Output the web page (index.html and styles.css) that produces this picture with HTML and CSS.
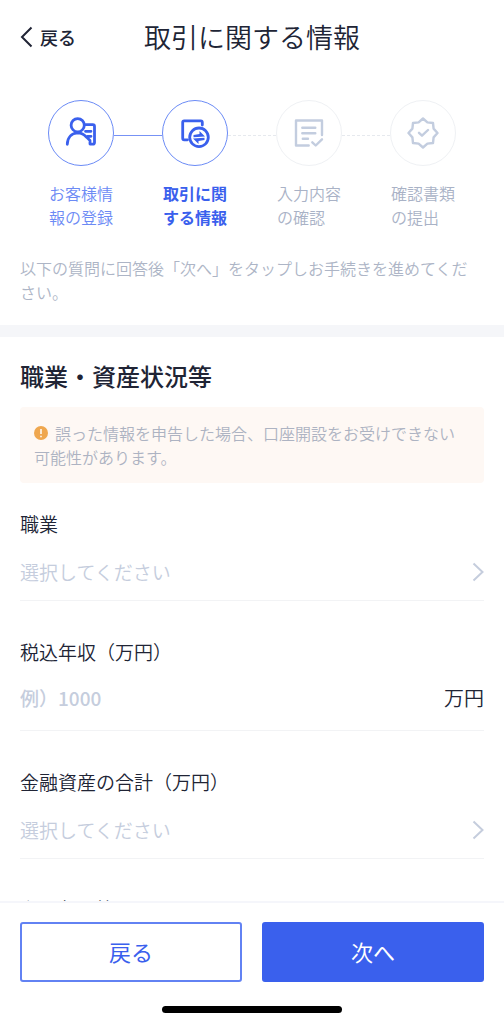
FILE: index.html
```html
<!DOCTYPE html>
<html lang="ja">
<head>
<meta charset="utf-8">
<meta name="viewport" content="width=device-width, initial-scale=1">
<title>取引に関する情報</title>
<link rel="stylesheet" href="styles.css">
</head>
<body>
<div class="app">
  <header class="header">
    <button class="back" type="button">
      <svg class="back-icon" viewBox="0 0 13 22" aria-hidden="true"><path d="M11.5 1.5 2 11l9.5 9.5"/></svg>
      <span>戻る</span>
    </button>
    <h1 class="title">取引に関する情報</h1>
  </header>

  <main class="content">
    <ol class="steps">
      <li class="step step-done">
        <span class="step-circle">
          <svg class="step-icon" viewBox="0 0 32 32" aria-hidden="true"><circle cx="12.7" cy="8.2" r="6.6"/><path d="M2.3 27.3C2.5 20 7 16 12.7 15.8c3.400 0 6.500 1.500 8.500 4.200M20.500 7.700h7.300q1.700 0 1.700 1.700v16q0 1.700-1.700 1.700H25v-3.500l-4-4M20.500 14.300H26M22.500 19.300H26"/></svg>
        </span>
        <span class="step-label">お客様情報の登録</span>
      </li>
      <li class="link link-done" aria-hidden="true"></li>
      <li class="step step-current" aria-current="step">
        <span class="step-circle">
          <svg class="step-icon" viewBox="0 0 32 32" aria-hidden="true"><path d="M23.300 8V5.300q0-1.500-1.500-1.500H5.200q-1.500 0-1.500 1.500v16q0 1.500 1.500 1.500H8.500"/><circle cx="20" cy="20.300" r="9.300"/><path class="arrows" d="M14.500 18 20.500 17V14L26 19.600 14.500 20.300ZM25.500 20.800 14 21.500 19.500 27V24L25.500 23Z"/></svg>
        </span>
        <span class="step-label">取引に関する情報</span>
      </li>
      <li class="link" aria-hidden="true"></li>
      <li class="step">
        <span class="step-circle">
          <svg class="step-icon" viewBox="0 0 32 32" aria-hidden="true"><path d="M29 18V3.500H3v25h12.700M9.300 10.700h13M9.300 16.300h13M9.800 21.700H15M19.300 25.300l3.400 3.200 6.300-6.200"/></svg>
        </span>
        <span class="step-label">入力内容の確認</span>
      </li>
      <li class="link" aria-hidden="true"></li>
      <li class="step">
        <span class="step-circle">
          <svg class="step-icon" viewBox="0 0 32 32" aria-hidden="true"><path d="M16 1.500 20.400 5.400 26 6 26.600 11.600 30.500 16 26.600 20.400 26 26 20.400 26.600 16 30.500 11.600 26.600 6 26 5.400 20.400 1.500 16 5.400 11.600 6 6 11.600 5.400ZM12 15.800 15 18.700 21 13"/></svg>
        </span>
        <span class="step-label">確認書類の提出</span>
      </li>
    </ol>

    <p class="intro">以下の質問に回答後「次へ」をタップしお手続きを進めてください。</p>

    <form class="section" id="profile">
      <h2 class="section-title">職業・資産状況等</h2>
      <p class="notice"><svg class="notice-icon" viewBox="0 0 14 14" aria-hidden="true"><circle cx="7" cy="7" r="7" fill="#efa74f"/><path d="M7 3v5M7 9.800v1.400" stroke="#fff" stroke-width="1.500"/></svg>誤った情報を申告した場合、口座開設をお受けできない可能性があります。</p>

      <div class="field">
        <label class="label" for="job">職業</label>
        <div class="control">
          <select class="input" id="job"><option>選択してください</option></select>
          <svg class="chevron" viewBox="0 0 12 20" aria-hidden="true"><path d="m1.500 1.500 9 8.500-9 8.500"/></svg>
        </div>
      </div>
      <div class="field">
        <label class="label" for="income">税込年収（万円）</label>
        <div class="control control-text">
          <input class="input" id="income" type="text" inputmode="numeric" placeholder="例）1000">
          <span class="unit">万円</span>
        </div>
      </div>
      <div class="field">
        <label class="label" for="assets">金融資産の合計（万円）</label>
        <div class="control">
          <select class="input" id="assets"><option>選択してください</option></select>
          <svg class="chevron" viewBox="0 0 12 20" aria-hidden="true"><path d="m1.500 1.500 9 8.500-9 8.500"/></svg>
        </div>
      </div>
      <div class="field">
        <label class="label" for="source">主な収入等</label>
        <div class="control">
          <select class="input" id="source"><option>選択してください</option></select>
          <svg class="chevron" viewBox="0 0 12 20" aria-hidden="true"><path d="m1.500 1.500 9 8.500-9 8.500"/></svg>
        </div>
      </div>
    </form>
  </main>

  <footer class="footer">
    <div class="actions">
      <button class="button" type="button">戻る</button>
      <button class="button button-primary" type="submit" form="profile">次へ</button>
    </div>
    <div class="home-bar"></div>
  </footer>
</div>
</body>
</html>
```

FILE: styles.css
```css
* { box-sizing: border-box; }

body {
  margin: 0;
  background: #fff;
  color: #202435;
  font-family: "Noto Sans CJK JP", sans-serif;
  font-size: 16px;
  font-weight: 350;
  line-height: 24px;
}

button, input, select { font: inherit; color: inherit; }
h1, h2, p, ol { margin: 0; padding: 0; }
svg { fill: none; flex: none; }

.app { display: flex; flex-direction: column; height: 100vh; }

.header {
  display: grid;
  grid-template-columns: 1fr auto 1fr;
  align-items: center;
  height: 74px;
  padding: 0 20px;
}
.back {
  display: flex;
  align-items: center;
  justify-self: start;
  gap: 7px;
  padding: 0;
  border: 0;
  background: none;
  font-size: 18px;
  font-weight: 500;
}
.back-icon { width: 13px; height: 22px; stroke: currentColor; stroke-width: 2; }
.title { font-size: 27px; font-weight: 350; line-height: 40px; }

.content {
  flex: 1;
  min-height: 0;
  overflow-y: auto;
  scrollbar-width: none;
}

.steps {
  display: flex;
  padding: 26px 48px 0;
  list-style: none;
  color: #a9b2c6;
}
.step { width: 66px; }
.step-circle {
  display: flex;
  align-items: center;
  justify-content: center;
  width: 66px;
  height: 66px;
  margin-bottom: 15px;
  border: 1px solid #eff1f4;
  border-radius: 50%;
}
.step-icon {
  width: 32px;
  height: 32px;
  stroke: #c3cddf;
  stroke-width: 2.4;
  stroke-linecap: round;
  stroke-linejoin: round;
}
.step-label { display: block; padding-left: 1px; }
.step-done, .step-current { color: #3a60ed; }
.step-done .step-label { color: #6c8af5; }
.step-current .step-label { font-weight: 700; }
.step-done .step-circle, .step-current .step-circle { border-color: #6b8bf6; }
.step-done .step-icon, .step-current .step-icon { stroke: currentColor; stroke-width: 2.8; }
.step-icon .arrows { fill: currentColor; stroke: none; }
.link { flex: 1; height: 36px; border-bottom: 1px dashed #e6e9ee; }
.link-done { border-bottom: 1px solid #7792f5; }

.intro {
  padding: 27px 28px 21px 20px;
  border-bottom: 12px solid #f5f6f9;
  color: #adb5c6;
}

.section { padding: 22px 20px; }
.section-title { font-size: 24px; font-weight: 500; line-height: 34px; }
.notice {
  margin: 14px 0 27px;
  padding: 14px 20px 14px 14px;
  border-radius: 4px;
  background: #fef8f4;
  color: #adb3c2;
}
.notice-icon { width: 14px; height: 14px; margin-right: 7px; }

.field { margin-bottom: 37px; }
.field:last-child { margin-bottom: 0; }
.label { display: block; margin-bottom: 6px; font-size: 19px; line-height: 28px; }
.control {
  display: flex;
  align-items: center;
  height: 57px;
  border-bottom: 1px solid #f2f3f5;
  font-size: 19px;
}
.control-text { height: 59px; padding-bottom: 7px; }
.input {
  flex: 1;
  min-width: 0;
  height: 40px;
  padding: 0;
  border: 0;
  outline: 0;
  appearance: none;
  background: none;
  color: #c5cddd;
}
.input::placeholder { color: #c5cddd; font-weight: 500; opacity: 1; }
.chevron { width: 12px; height: 20px; stroke: #c5cddd; stroke-width: 2; }
.unit { font-size: 20px; }

.footer { padding: 19px 20px 11px; border-top: 2px solid #f5f6fb; background: #fff; }
.actions { display: grid; grid-template-columns: 1fr 1fr; gap: 20px; }
.field:nth-last-child(2) { margin-bottom: 36px; }
.button {
  height: 60px;
  padding: 0 0 2px;
  border: 2px solid #6282f3;
  border-radius: 3px;
  background: #fff;
  color: #3a60ed;
  font-size: 22px;
  font-weight: 400;
}
.button-primary { border-color: #3a60ed; background: #3a60ed; color: #fff; }
.home-bar { width: 180px; height: 7px; margin: 24px auto 0; border-radius: 4px; background: #000; }
```
